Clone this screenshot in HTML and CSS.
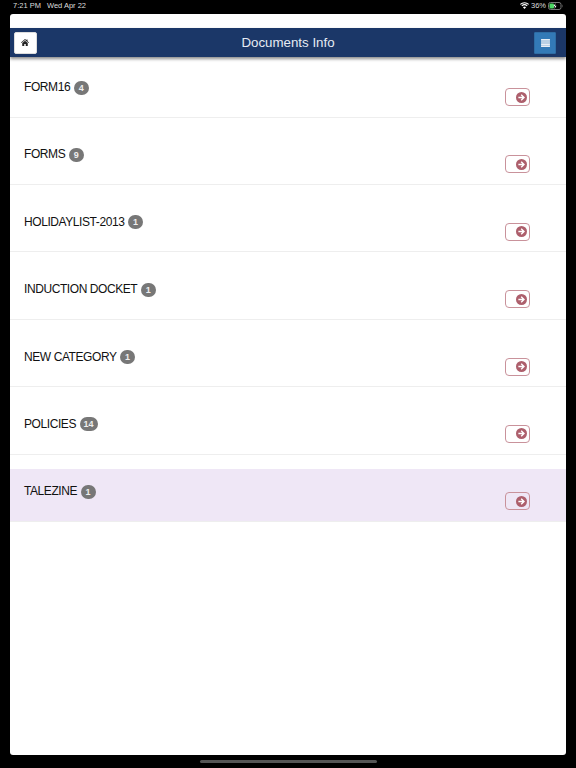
FILE: index.html
```html
<!DOCTYPE html>
<html lang="en">
<head>
  <meta charset="UTF-8">
  <meta name="viewport" content="width=device-width, initial-scale=1.0">
  <title>Documents Info</title>
  <link rel="stylesheet" href="styles.css">
</head>
<body>
  <svg class="defs" width="0" height="0">
    <symbol id="go" viewBox="0 0 12 12">
      <circle cx="6" cy="6" r="6" fill="#ad5f6c"/>
      <path d="M6.200 2.400 9.800 6l-3.600 3.600-1.100-1.100L6.800 6.800H2.600V5.200h4.200L5.100 3.500z" fill="#fff"/>
    </symbol>
  </svg>

  <div class="status-bar">
    <div class="status-left">
      <span>7:21 PM</span>
      <span>Wed Apr 22</span>
    </div>
    <div class="status-right">
      <svg class="wifi" viewBox="0 0 12 9" width="9" height="7">
        <path d="M6 9 3.900 6.700a3 3 0 0 1 4.200 0z" fill="#fff"/>
        <path d="M2.900 5.600a4.500 4.500 0 0 1 6.200 0l1-1.100a6 6 0 0 0-8.200 0z" fill="#fff"/>
        <path d="M.9 3.500a7.400 7.400 0 0 1 10.200 0l.9-1a8.800 8.800 0 0 0-12 0z" fill="#fff"/>
      </svg>
      <span>36%</span>
      <svg class="battery" viewBox="0 0 15 8" width="15" height="8">
        <rect x=".5" y=".5" width="12.500" height="7" rx="2" fill="none" stroke="#777"/>
        <rect x="1.500" y="1.500" width="4.500" height="5" rx="1" fill="#4cd964"/>
        <path d="M14 2.500c.7.3.7 2.700 0 3z" fill="#777"/>
        <path d="M7.500 1 5.500 4.300h1.500L6.500 7l2-3.300H7z" fill="#fff"/>
      </svg>
    </div>
  </div>

  <div class="app">
    <div class="header">
      <button class="btn-home">
        <svg viewBox="0 0 16 14" width="8" height="7">
          <path d="M8 0 0 7l1 1.200L8 2.200l7 6L16 7l-3-2.600V1h-2v1.700z" fill="#222"/>
          <path d="M8 3.500 2.500 8.200V14h4v-4h3v4h4V8.200z" fill="#222"/>
        </svg>
      </button>
      <h1>Documents Info</h1>
      <button class="btn-menu">
        <svg viewBox="0 0 10 9" width="9" height="8">
          <path d="M0 0h10v1.900H0zM0 2.400h10v1.900H0zM0 4.800h10v1.900H0zM0 7.100h10V9H0z" fill="#e8eef5"/>
        </svg>
      </button>
    </div>

    <ul class="doc-list">
      <li class="doc-row">
        <span class="doc-name">FORM16</span><span class="badge">4</span>
        <button class="btn-go"><svg width="11" height="11"><use href="#go"/></svg></button>
      </li>
      <li class="doc-row">
        <span class="doc-name">FORMS</span><span class="badge">9</span>
        <button class="btn-go"><svg width="11" height="11"><use href="#go"/></svg></button>
      </li>
      <li class="doc-row">
        <span class="doc-name">HOLIDAYLIST-2013</span><span class="badge">1</span>
        <button class="btn-go"><svg width="11" height="11"><use href="#go"/></svg></button>
      </li>
      <li class="doc-row">
        <span class="doc-name">INDUCTION DOCKET</span><span class="badge">1</span>
        <button class="btn-go"><svg width="11" height="11"><use href="#go"/></svg></button>
      </li>
      <li class="doc-row">
        <span class="doc-name">NEW CATEGORY</span><span class="badge">1</span>
        <button class="btn-go"><svg width="11" height="11"><use href="#go"/></svg></button>
      </li>
      <li class="doc-row">
        <span class="doc-name">POLICIES</span><span class="badge">14</span>
        <button class="btn-go"><svg width="11" height="11"><use href="#go"/></svg></button>
      </li>
      <li class="doc-row selected">
        <span class="doc-name">TALEZINE</span><span class="badge">1</span>
        <button class="btn-go"><svg width="11" height="11"><use href="#go"/></svg></button>
      </li>
    </ul>
  </div>

  <div class="home-bar"><span></span></div>
</body>
</html>
```

FILE: styles.css
```css
html, body {
  height: 100%;
}
body {
  margin: 0;
  background-color: #000;
  font-family: "Liberation Sans", Arial, sans-serif;
  display: flex;
  flex-direction: column;
  overflow: hidden;
}
button {
  padding: 0;
  cursor: pointer;
  display: flex;
  align-items: center;
  justify-content: center;
}
.defs {
  position: absolute;
}
.status-bar {
  height: 14px;
  padding: 0 13px 3px 13px;
  box-sizing: border-box;
  display: flex;
  justify-content: space-between;
  align-items: center;
  color: #ddd;
  font-size: 7.5px;
}
.status-left {
  display: flex;
  gap: 6px;
}
.status-right {
  display: flex;
  align-items: center;
  gap: 2px;
}
.app {
  height: 741px;
  margin: 0 10px;
  padding-top: 14px;
  box-sizing: border-box;
  background-color: #fff;
  border-radius: 3px;
}
.header {
  height: 29px;
  padding: 0 3.5px;
  box-sizing: border-box;
  background-color: #1b3768;
  box-shadow: 0 2px 3px rgba(0, 0, 0, 0.45);
  display: grid;
  grid-template-columns: 1fr auto 1fr;
  align-items: center;
}
.header h1 {
  margin: 0;
  color: #e6ebf3;
  font-size: 13.300px;
  font-weight: normal;
}
.btn-home {
  width: 23.500px;
  height: 22px;
  background-color: #fff;
  border: 1px solid #ddd;
  border-radius: 2px;
}
.btn-menu {
  justify-self: end;
  width: 22px;
  height: 22px;
  margin-right: 6.500px;
  background-color: #337ab7;
  border: 1px solid #2e6da4;
  border-radius: 1px;
}
.doc-list {
  margin: 0;
  padding: 8px 0 0;
  list-style: none;
}
.doc-row {
  height: 52.600px;
  margin-bottom: 14.800px;
  padding: 14px 14px 0;
  box-sizing: border-box;
  border-bottom: 1px solid #eee;
  display: flex;
  align-items: flex-start;
  position: relative;
  color: #111;
  font-size: 12px;
  line-height: 16px;
}
.doc-row.selected {
  background-color: #efe7f6;
}
.doc-name {
  letter-spacing: -0.420px;
}
.badge {
  min-width: 7px;
  height: 14px;
  margin: 1.500px 0 0 3.500px;
  padding: 0 4px;
  background-color: #777;
  border-radius: 7px;
  color: #eee;
  font-size: 9px;
  font-weight: bold;
  line-height: 14px;
  text-align: center;
}
.btn-go {
  position: absolute;
  top: 23px;
  right: 36.500px;
  width: 24.500px;
  height: 18px;
  box-sizing: border-box;
  justify-content: flex-end;
  padding-right: 1.500px;
  background-color: transparent;
  border: 1px solid #c9929b;
  border-radius: 4px;
}
.home-bar {
  flex: 1;
  display: flex;
  justify-content: center;
  align-items: center;
}
.home-bar span {
  width: 177px;
  height: 3px;
  background-color: #555;
  border-radius: 2px;
}
```
